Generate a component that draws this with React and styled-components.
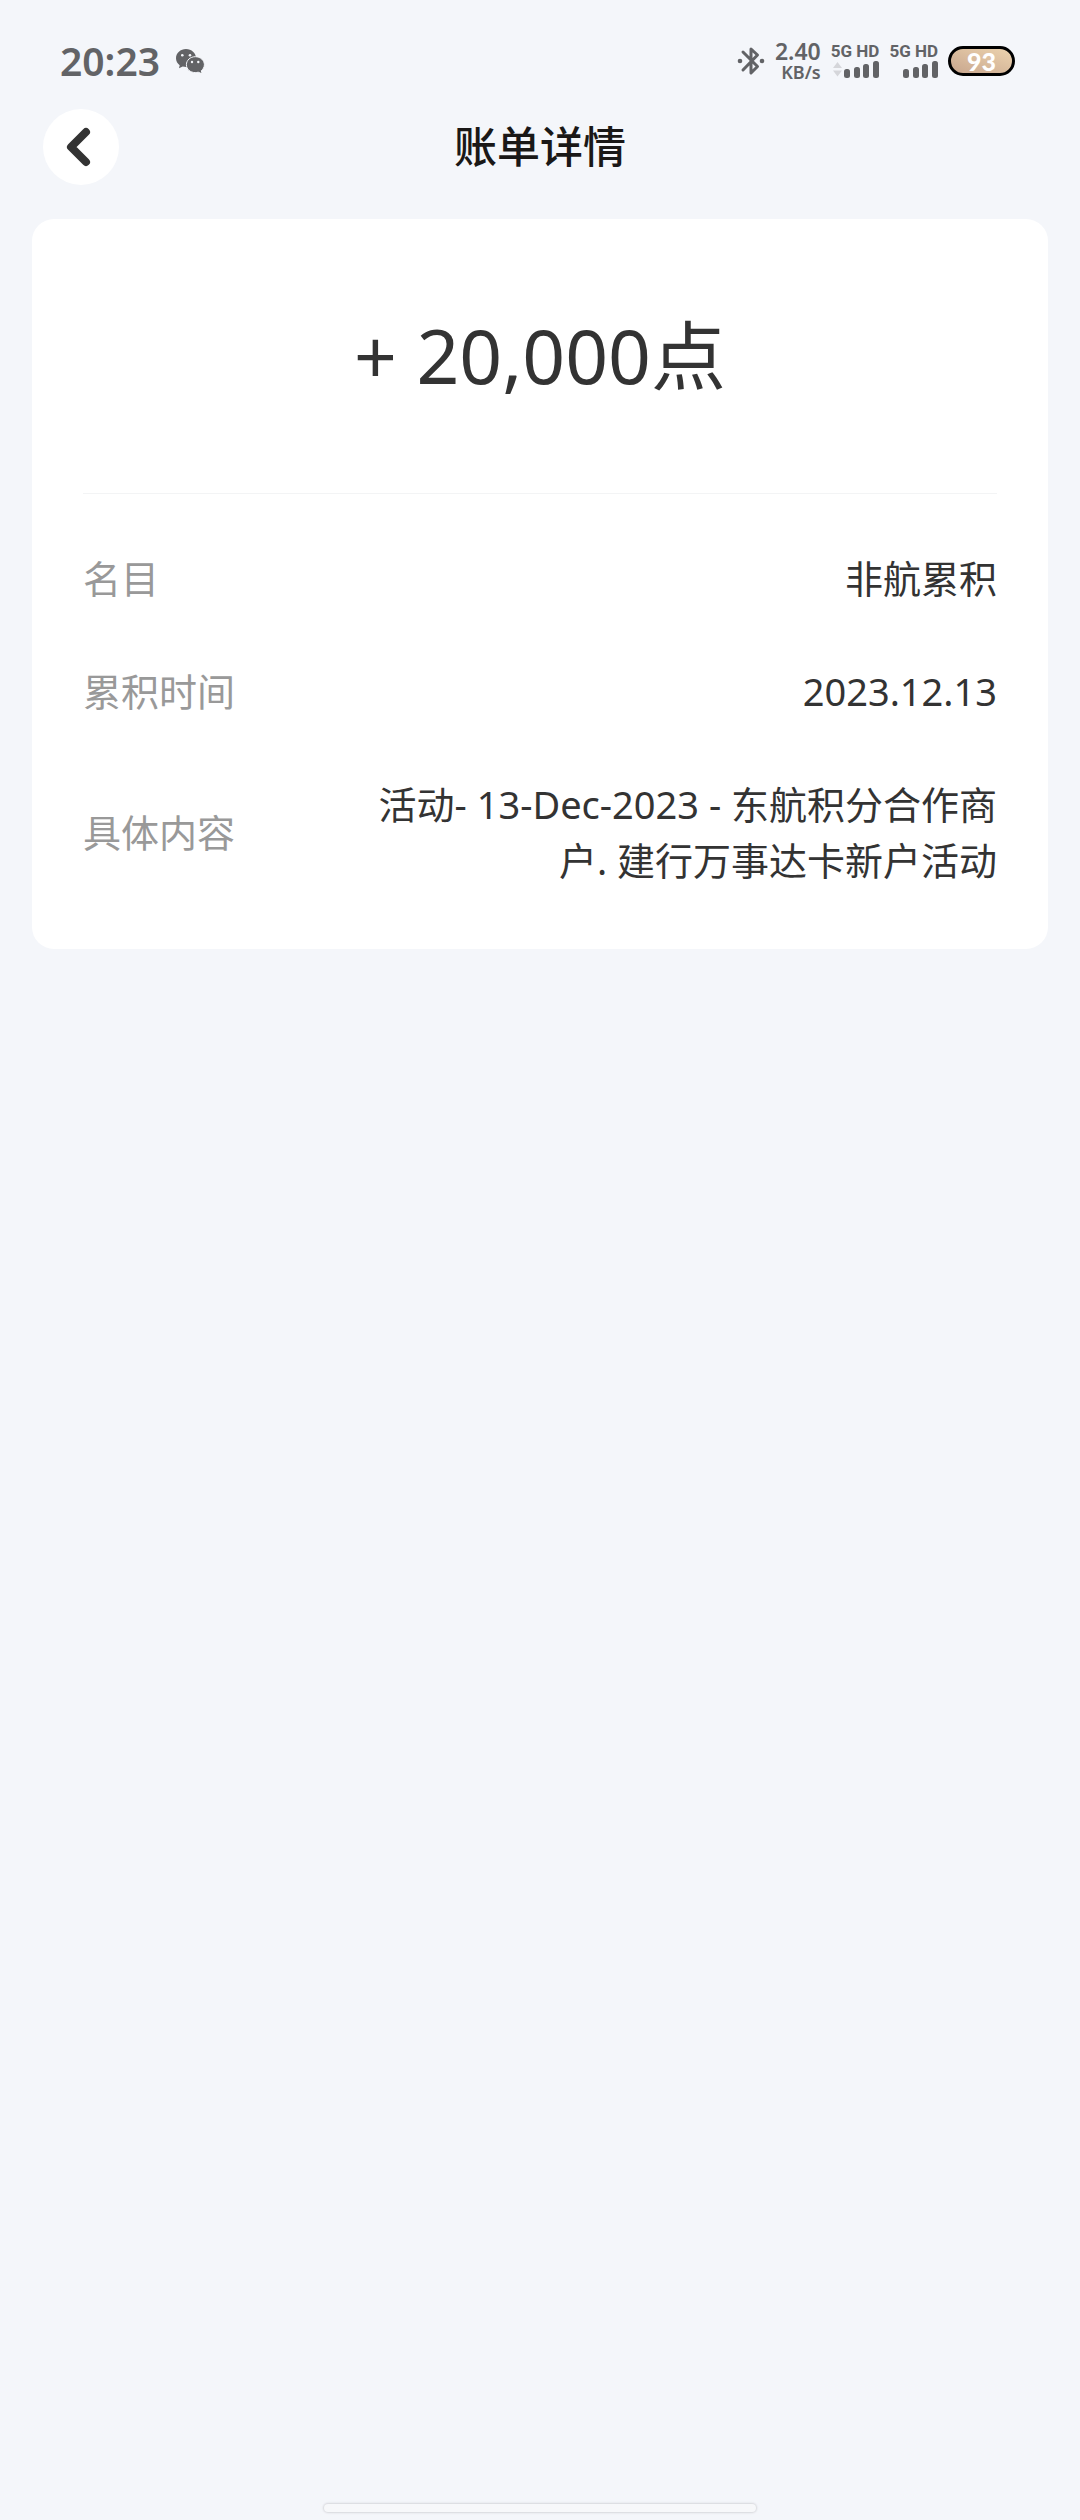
import React from "react";
import styled, { createGlobalStyle } from "styled-components";

const theme = {
  background: "#f4f6fa",
  card: "#ffffff",
  text: "#333333",
  title: "#1a1817",
  muted: "#999999",
  status: "#626366",
  line: "#f3f4f5",
};

const details = [
  { label: "名目", value: "非航累积" },
  { label: "累积时间", value: "2023.12.13" },
  {
    label: "具体内容",
    value: "活动- 13-Dec-2023 - 东航积分合作商户. 建行万事达卡新户活动",
  },
];

const WechatIcon = () => (
  <svg width="29" height="24" viewBox="0 0 29 24" aria-hidden="true">
    <g fill={theme.status}>
      <path d="M10 0C4.500 0 0 4 0 9.200c0 2.900 1.400 5.300 3.700 7L3 19.200l3.700-1.800c1 .3 2.200.5 3.300.5 5.500 0 10-3.900 10-8.900S15.500 0 10 0Z" />
      <path
        d="M19.300 7.700c-5 0-8.900 3.500-8.900 8s3.900 7.900 8.900 7.900c1 0 2-.2 2.900-.4l4 1.600-.9-3C27 20.300 28.400 18.100 28.400 15.700c0-4.500-4.100-8-9.100-8Z"
        stroke={theme.background}
        strokeWidth="1"
      />
    </g>
    <g fill={theme.background}>
      <circle cx="6.300" cy="6.200" r="1.300" />
      <circle cx="14" cy="6.200" r="1.300" />
      <circle cx="16" cy="13" r="1.200" />
      <circle cx="22.300" cy="13" r="1.200" />
    </g>
  </svg>
);

const BluetoothIcon = () => (
  <svg width="28" height="30" viewBox="0 0 28 30" aria-hidden="true">
    <path
      d="M6 6l14.500 14.500L14 27V3l6.500 6L6 24"
      fill="none"
      stroke={theme.status}
      strokeWidth="3"
      strokeLinejoin="round"
      strokeLinecap="round"
    />
    <circle cx="3" cy="15" r="2.300" fill={theme.status} />
    <circle cx="25" cy="15" r="2.300" fill={theme.status} />
  </svg>
);

const SignalIcon = ({ arrows }) => (
  <svg width="46" height="17" viewBox="0 0 46 17" aria-hidden="true">
    {arrows && (
      <path d="M0 7l4.500-6L9 7ZM0 9.500h9L4.500 15.500Z" fill="#d5d6da" />
    )}
    <g fill={theme.status}>
      <rect x="11" y="8" width="6" height="9" rx="2.500" />
      <rect x="21" y="6" width="6" height="11" rx="2.500" />
      <rect x="30" y="3" width="6" height="14" rx="2.500" />
      <rect x="40" y="0" width="6" height="17" rx="2.500" />
    </g>
  </svg>
);

const BackIcon = () => (
  <svg width="26" height="40" viewBox="0 0 26 40" aria-hidden="true">
    <path
      d="M21 5L6 20l15 15"
      fill="none"
      stroke={theme.text}
      strokeWidth="8"
      strokeLinecap="round"
      strokeLinejoin="round"
    />
  </svg>
);

const Signal = ({ arrows }) => (
  <SignalColumn>
    <SignalLabel>5G HD</SignalLabel>
    <SignalIcon arrows={arrows} />
  </SignalColumn>
);

const App = () => {
  return (
    <>
      <GlobalStyle />
      <Page>
        <StatusBar>
          <Clock>20:23</Clock>
          <WechatIcon />
          <StatusRight>
            <BluetoothIcon />
            <Speed>
              <SpeedValue>2.40</SpeedValue>
              <SpeedUnit>KB/s</SpeedUnit>
            </Speed>
            <Signal arrows />
            <Signal />
            <Battery>93</Battery>
          </StatusRight>
        </StatusBar>

        <Header>
          <BackButton type="button" aria-label="返回">
            <BackIcon />
          </BackButton>
          <Title>账单详情</Title>
        </Header>

        <Card>
          <Amount>+ 20,000点</Amount>
          <Details>
            {details.map(({ label, value }) => (
              <Row key={label}>
                <Label>{label}</Label>
                <Value>{value}</Value>
              </Row>
            ))}
          </Details>
        </Card>

        <HomeIndicator />
      </Page>
    </>
  );
};

const GlobalStyle = createGlobalStyle`
  * {
    box-sizing: border-box;
  }

  body {
    margin: 0;
    background: ${theme.background};
    color: ${theme.text};
    font-family: "Noto Sans", "Noto Sans CJK SC", sans-serif;
  }
`;

const Page = styled.div`
  min-height: 100vh;
  display: flex;
  flex-direction: column;
`;

const StatusBar = styled.div`
  height: 100px;
  padding: 22px 65px 0 60px;

  display: flex;
  align-items: center;
  gap: 16px;

  color: ${theme.status};
`;

const Clock = styled.span`
  font-size: 39px;
  font-weight: 600;
  line-height: 40px;
`;

const StatusRight = styled.div`
  margin-left: auto;

  display: flex;
  align-items: center;
  gap: 10px;
`;

const Speed = styled.div`
  display: flex;
  flex-direction: column;
  align-items: flex-end;
  gap: 2px;

  font-weight: 600;
`;

const SpeedValue = styled.span`
  font-size: 23px;
  line-height: 20px;
`;

const SpeedUnit = styled.span`
  font-size: 18px;
  line-height: 18px;
`;

const SignalColumn = styled.div`
  display: flex;
  flex-direction: column;
  align-items: flex-end;
  gap: 3px;
`;

const SignalLabel = styled.span`
  font-family: Roboto, sans-serif;
  font-size: 17px;
  font-weight: 700;
  line-height: 14px;
`;

const Battery = styled.span`
  width: 67px;
  height: 30px;
  border: 3px solid #000000;
  border-radius: 15px;
  background: linear-gradient(20deg, #c8a68e, #ecd3ae);

  display: flex;
  align-items: center;
  justify-content: center;

  color: #ffffff;
  font-family: Lato, sans-serif;
  font-size: 25px;
  font-weight: 900;
  line-height: 24px;
`;

const Header = styled.header`
  padding: 9px 43px 34px;

  display: grid;
  grid-template-columns: 76px 1fr 76px;
  align-items: center;
`;

const BackButton = styled.button`
  width: 76px;
  height: 76px;
  padding: 0 6px 0 0;
  border: 0;
  border-radius: 50%;
  background: ${theme.card};
  cursor: pointer;

  display: flex;
  align-items: center;
  justify-content: center;
`;

const Title = styled.h1`
  margin: 0;
  color: ${theme.title};
  text-align: center;
  font-size: 43px;
  font-weight: 500;
  line-height: 60px;
`;

const Card = styled.main`
  margin: 0 32px;
  padding: 0 51px 61px;
  border-radius: 22px;
  background: ${theme.card};
`;

const Amount = styled.p`
  margin: 0;
  padding: 80px 0 82px;
  border-bottom: 1px solid ${theme.line};
  text-align: center;
  font-size: 75px;
  line-height: 112px;
`;

const Details = styled.dl`
  margin: 0;
  padding-top: 56px;

  display: flex;
  flex-direction: column;
  gap: 57px;
`;

const Row = styled.div`
  display: flex;
  align-items: center;
  justify-content: space-between;
  gap: 32px;

  font-size: 38px;
  line-height: 56px;
`;

const Label = styled.dt`
  flex-shrink: 0;
  color: ${theme.muted};
`;

const Value = styled.dd`
  max-width: 70%;
  margin: 0;
  text-align: right;
`;

const HomeIndicator = styled.div`
  width: 40%;
  height: 8px;
  margin: auto auto 8px;
  border-radius: 4px;
  background: #f7f8fa;
  box-shadow: 0 0 2px 1px #d6d7db;
`;

export default App;
